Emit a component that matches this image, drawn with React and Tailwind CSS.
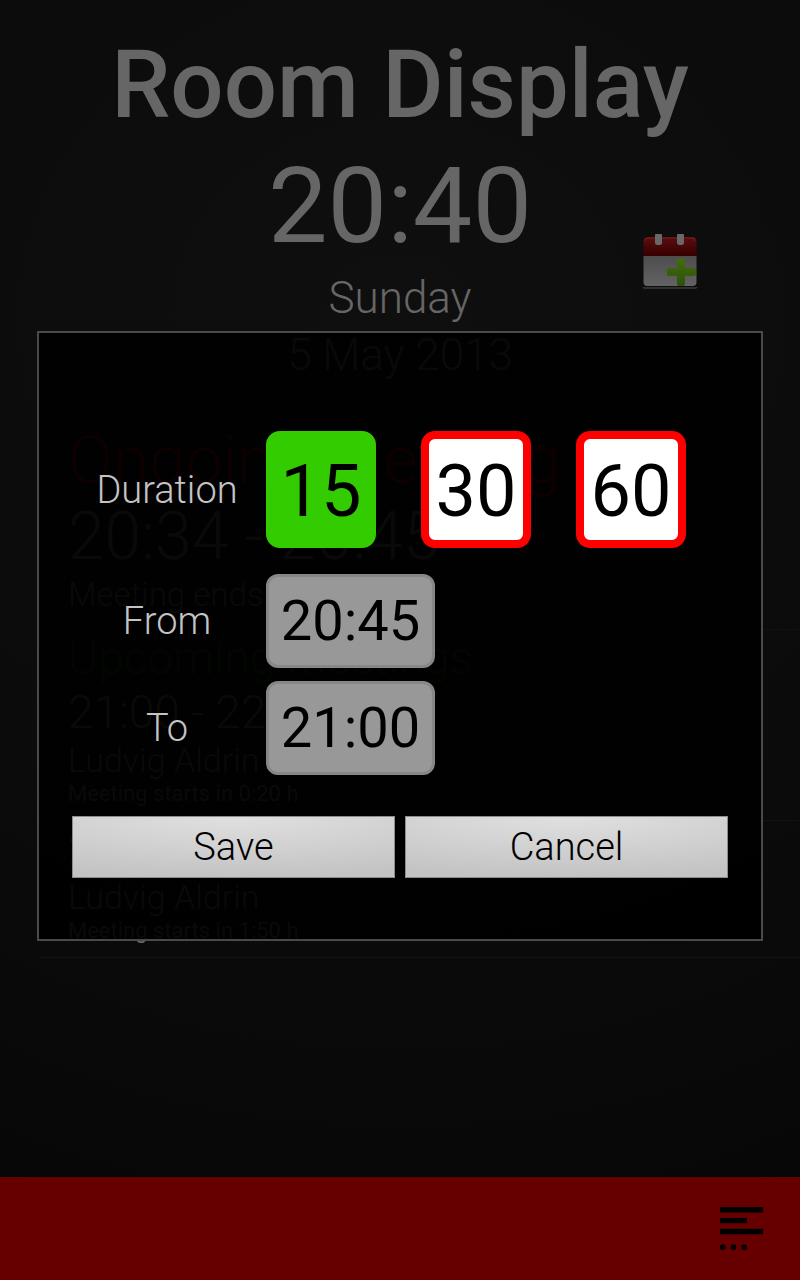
// src/App.jsx
import { useState } from 'react';

const DURATIONS = [15, 30, 60];

const MEETINGS = [
  { time: '21:00 - 22:00', owner: 'Ludvig Aldrin', starts: 'Meeting starts in 0:20 h' },
  { time: '22:30 - 23:00', owner: 'Ludvig Aldrin', starts: 'Meeting starts in 1:50 h' },
];

const addMinutes = (time, minutes) => {
  const [h, m] = time.split(':').map(Number);
  const total = (h * 60 + m + minutes) % 1440;
  return `${String(Math.floor(total / 60)).padStart(2, '0')}:${String(total % 60).padStart(2, '0')}`;
};

function CalendarAddIcon() {
  return (
    <svg width="56" height="58" viewBox="0 0 56 58" aria-hidden="true">
      <defs>
        <linearGradient id="calRed" x1="0" y1="0" x2="0" y2="1">
          <stop offset="0" stopColor="#5c0d0d" />
          <stop offset="1" stopColor="#360000" />
        </linearGradient>
        <linearGradient id="calPaper" x1="0" y1="0" x2="0" y2="1">
          <stop offset="0" stopColor="#4d4d4d" />
          <stop offset="1" stopColor="#636363" />
        </linearGradient>
        <linearGradient id="calPlus" x1="0" y1="0" x2="0" y2="1">
          <stop offset="0" stopColor="#456b10" />
          <stop offset="1" stopColor="#2b5208" />
        </linearGradient>
      </defs>
      <path d="M0 53H56L54 55H2Z" fill="#303030" />
      <path d="M1.500 22H54.500V48a4 4 0 0 1-4 4H5.500a4 4 0 0 1-4-4Z" fill="url(#calPaper)" />
      <path d="M1.500 22V7a4 4 0 0 1 4-4H50.500a4 4 0 0 1 4 4V22Z" fill="url(#calRed)" />
      <path d="M3 7a3 3 0 0 1 3-3H50a3 3 0 0 1 3 3" fill="none" stroke="#751f1f" strokeWidth="1" />
      <rect x="13" y="-1" width="7" height="12" rx="2.500" fill="#686868" />
      <rect x="35" y="-1" width="7" height="12" rx="2.500" fill="#686868" />
      <path d="M37 24h4q2 0 2 2v8h9q2 0 2 2v4q0 2-2 2h-9v8q0 2-2 2h-4q-2 0-2-2v-8h-8q-2 0-2-2v-4q0-2 2-2h8v-8q0-2 2-2Z" fill="url(#calPlus)" />
    </svg>
  );
}

function MenuIcon() {
  return (
    <svg width="43" height="44" viewBox="0 0 43 44" aria-hidden="true">
      <path d="M0 0h43v5.500H0zM0 11h27v5.200H0zM0 21.700h43v5.500H0z" />
      <rect x="0" y="37.500" width="5.500" height="5.500" rx="2" />
      <rect x="10.700" y="37.500" width="5.500" height="5.500" rx="2" />
      <rect x="21.500" y="37.500" width="5.500" height="5.500" rx="2" />
    </svg>
  );
}

function BookingDialog() {
  const [duration, setDuration] = useState(15);
  const [from, setFrom] = useState('20:45');

  const labelClass = 'w-[190px] text-center text-[38px] leading-[48px] font-light text-[#c4c4c4]';
  const timeClass =
    'w-[169px] h-[94px] rounded-xl border-3 border-[#878787] bg-[#989898] text-center text-[56px] text-black outline-none';

  return (
    <div
      role="dialog"
      aria-label="Book meeting"
      className="w-full border-2 border-[#4a4a4a] bg-black/91 px-[33px] pt-[98px] pb-[61px]"
    >
      <div className="flex items-center gap-1 mb-[26px]">
        <span id="duration" className={labelClass}>Duration</span>
        <div role="group" aria-labelledby="duration" className="flex gap-[45px]">
          {DURATIONS.map(d => (
            <button
              key={d}
              type="button"
              aria-pressed={d === duration}
              onClick={() => setDuration(d)}
              className={`w-[110px] h-[117px] rounded-[14px] border-8 pt-1 text-[72px] leading-[84px] text-black ${
                d === duration ? 'border-[#33cc00] bg-[#33cc00]' : 'border-[#ff0000] bg-white'
              }`}
            >
              {d}
            </button>
          ))}
        </div>
      </div>

      <div className="flex items-center gap-1 mb-[13px]">
        <label htmlFor="from" className={labelClass}>From</label>
        <input id="from" value={from} onChange={e => setFrom(e.target.value)} className={timeClass} />
      </div>

      <div className="flex items-center gap-1">
        <label htmlFor="to" className={labelClass}>To</label>
        <input id="to" value={addMinutes(from, duration)} readOnly className={timeClass} />
      </div>

      <div className="mt-[41px] grid grid-cols-2 gap-[10px]">
        {['Save', 'Cancel'].map(text => (
          <button
            key={text}
            type="button"
            className="h-[62px] border border-[#8c8c8c] bg-[radial-gradient(110%_100%_at_50%_0%,#e0e0e0,#c3c3c3)] text-[38px] leading-[48px] font-light text-black"
          >
            {text}
          </button>
        ))}
      </div>
    </div>
  );
}

export default function App() {
  return (
    <div className="relative min-h-screen flex flex-col bg-[radial-gradient(160%_90%_at_50%_25%,#0f0f0f,#0a0a0a_60%,#040404)] font-['Roboto',sans-serif] text-[#666666]">
      <header className="pt-7 text-center">
        <h1 className="text-[94px] leading-[114px] font-medium">Room Display</h1>
        <div className="grid grid-cols-[1fr_auto_1fr] items-center">
          <div className="col-start-2">
            <p className="text-[106px] leading-[128px]">20:40</p>
            <p className="text-[44px] leading-[56px] font-light">Sunday</p>
            <p className="text-[44px] leading-[58px] font-light">5 May 2013</p>
          </div>
          <button type="button" aria-label="Add meeting" className="justify-self-center ml-2">
            <CalendarAddIcon />
          </button>
        </div>
      </header>

      <main className="flex-1 ml-10 mt-[37px]">
        <section className="border-b border-[#121212] pl-7 pb-3">
          <h2 className="text-[66px] leading-[80px] font-light text-[#880000]">Ongoing Meeting</h2>
          <p className="text-[66px] leading-[72px] font-light">20:34 - 20:45</p>
          <p className="text-[33px] leading-[44px] font-light">Meeting ends in 0:05 h</p>
        </section>
        <section>
          <h2 className="pl-7 pt-[2px] text-[46px] leading-[52px] font-light text-[#145200]">Upcoming Meetings</h2>
          <ul>
            {MEETINGS.map(m => (
              <li key={m.time} className="border-b border-[#121212] pl-7 pb-3 font-light">
                <p className="text-[46px] leading-[56px]">{m.time}</p>
                <p className="text-[34px] leading-[40px]">{m.owner}</p>
                <p className="text-[22px] leading-[28px] font-normal">{m.starts}</p>
              </li>
            ))}
          </ul>
        </section>
      </main>

      <footer className="h-[103px] flex items-center justify-end bg-[#660000] px-[37px]">
        <button type="button" aria-label="Menu" className="text-black">
          <MenuIcon />
        </button>
      </footer>

      {/* Dialog over the display */}
      <div className="absolute inset-0 flex items-center px-[37px] pb-2">
        <BookingDialog />
      </div>
    </div>
  );
}
